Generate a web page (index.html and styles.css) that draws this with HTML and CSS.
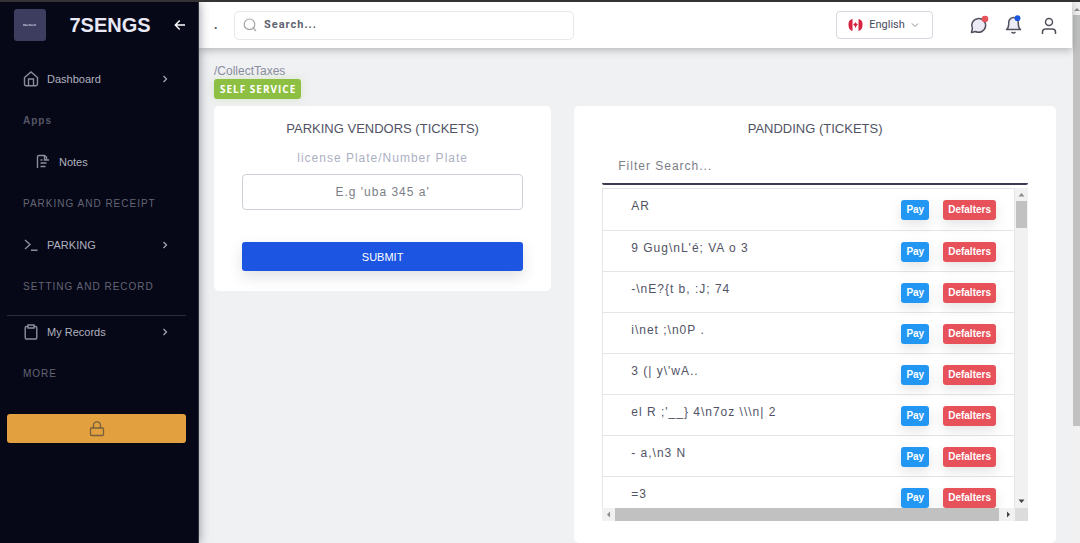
FILE: index.html
```html
<!DOCTYPE html>
<html lang="en">
<head>
<meta charset="utf-8">
<meta name="viewport" content="width=device-width, initial-scale=1">
<title>7SENGS</title>
<link rel="stylesheet" href="styles.css">
</head>
<body>
<div class="app">
  <aside class="sidebar">
    <div class="brand">
      <span class="brand-logo"><svg width="14" height="4" viewBox="0 0 14 4"><path d="M0 2h3M4 1.500v1.500M5.500 2h2.500M9 1.500v1.500M10.500 2h2.500" stroke="#a9a9c4" stroke-width="1.600"/></svg></span>
      <span class="brand-name">7SENGS</span>
      <button class="icon-button" type="button" aria-label="Collapse menu"><svg width="12" height="12" viewBox="0 0 12 12" fill="none" stroke="#fff" stroke-width="1.400"><path d="M11 6H1.500M5.700 1.500 1.300 6l4.400 4.500"/></svg></button>
    </div>
    <nav class="menu">
      <a class="menu-item" href="#">
        <svg class="menu-icon" viewBox="0 0 16 16"><path d="M1.500 6.500 8 1l6.500 5.500V13q0 1.700-1.700 1.700H3.200Q1.500 14.700 1.500 13zM5.500 14.500V8h5v6.500"/></svg>
        <span class="menu-label">Dashboard</span>
        <svg class="chevron" viewBox="0 0 6 8"><path d="m1.500 1 3 3-3 3"/></svg>
      </a>
      <p class="menu-heading menu-group spaced">Apps</p>
      <a class="menu-item menu-sub" href="#">
        <svg class="menu-icon" viewBox="0 0 16 16"><path d="M2.500 14V2.500Q2.500 1.500 4 1.500h5.500V6H14M9.500 1.500l2 1.500v2.500M5.500 6h2M5.500 9h6M5.500 12.500h5"/></svg>
        <span class="menu-label">Notes</span>
      </a>
      <p class="menu-heading spaced">PARKING AND RECEIPT</p>
      <a class="menu-item" href="#">
        <svg class="menu-icon" viewBox="0 0 16 16"><path d="m2 3 5 4.500L2 12M8 13.200h6.500"/></svg>
        <span class="menu-label">PARKING</span>
        <svg class="chevron" viewBox="0 0 6 8"><path d="m1.500 1 3 3-3 3"/></svg>
      </a>
      <p class="menu-heading spaced">SETTING AND RECORD</p>
      <hr class="menu-rule">
      <a class="menu-item" href="#">
        <svg class="menu-icon" viewBox="0 0 16 16"><path d="M5 2.500H3.300Q2.200 2.500 2.200 4v9.500q0 1.500 1.100 1.500h9.400q1.100 0 1.100-1.500V4q0-1.500-1.100-1.500H11M5 1h6v3H5z"/></svg>
        <span class="menu-label">My Records</span>
        <svg class="chevron" viewBox="0 0 6 8"><path d="m1.500 1 3 3-3 3"/></svg>
      </a>
      <p class="menu-heading spaced">MORE</p>
    </nav>
    <button class="lock-button" type="button" aria-label="Lock"><svg width="16" height="16" viewBox="0 0 16 16" fill="none" stroke="#76603d" stroke-width="1.300"><rect x="1.500" y="7" width="13" height="7.500" rx="1"/><path d="M4.500 7V4.300a3.500 3.500 0 0 1 7 0V7"/></svg></button>
  </aside>

  <div class="page">
    <header class="topbar">
      <span class="dot">.</span>
      <label class="search">
        <svg width="14" height="14" viewBox="0 0 14 14" fill="none" stroke="#a5a5a9" stroke-width="1.200"><circle cx="6.500" cy="6.300" r="5.300"/><path d="m10.300 10 2.700 3"/></svg>
        <input class="search-input spaced" type="search" placeholder="Search..." aria-label="Search">
      </label>
      <div class="tools">
        <button class="language" type="button">
          <svg width="15" height="14" viewBox="0 0 15 14"><path d="M4.500 1Q0 2 .500 7q0 5 4 6z" fill="#d7233f"/><path d="M10.500 1Q15 2 14.500 7q0 5-4 6z" fill="#d7233f"/><path d="m7.500 4 .8 1.500 1.500.4-.8 1.700-1.100.8v1.400h-.8V8.400L6 7.600l-.8-1.700 1.500-.4z" fill="#d7233f"/></svg>
          <span>English</span>
          <svg width="8" height="6" viewBox="0 0 8 6" fill="none" stroke="#8d8d96"><path d="m1 1.500 3 3 3-3"/></svg>
        </button>
        <button class="icon-button" type="button" aria-label="Messages"><svg width="20" height="20" viewBox="0 0 20 20"><path d="M2.500 17.500 3.400 13.500A7 6.800 0 1 1 6.500 16.500z" fill="#ecebf5" stroke="#51515e" stroke-width="1.500" stroke-linejoin="round"/><circle cx="16" cy="4" r="3.300" fill="#e7515a"/></svg></button>
        <button class="icon-button" type="button" aria-label="Notifications"><svg width="20" height="20" viewBox="0 0 20 20"><path d="M2.500 14.500q2.200-1.500 2.200-5.500V7.500a4.800 5 0 0 1 9.600 0V9q0 4 2.200 5.500z" fill="#ecebf5" stroke="#51515e" stroke-width="1.500" stroke-linejoin="round"/><path d="M7.500 17.200q2 1.500 4 0" fill="none" stroke="#51515e" stroke-width="1.500"/><circle cx="13.500" cy="3.200" r="2.900" fill="#1b55e2"/></svg></button>
        <button class="icon-button" type="button" aria-label="Account"><svg width="20" height="20" viewBox="0 0 20 20" fill="none" stroke="#51515e" stroke-width="1.500"><circle cx="10" cy="7" r="3.500"/><path d="M3.500 19v-2q0-3 3.200-3h6.600q3.200 0 3.200 3v2"/></svg></button>
      </div>
    </header>

    <main class="content">
      <p class="breadcrumb">/CollectTaxes</p>
      <span class="badge spaced">SELF SERVICE</span>
      <div class="cards">
        <form class="card">
          <h2 class="card-title">PARKING VENDORS (TICKETS)</h2>
          <label class="field-label spaced" for="plate">license Plate/Number Plate</label>
          <input class="field spaced" id="plate" type="text" placeholder="E.g 'uba 345 a'">
          <button class="submit" type="button">SUBMIT</button>
        </form>
        <section class="card card-tall">
          <h2 class="card-title">PANDDING (TICKETS)</h2>
          <input class="filter spaced" type="text" placeholder="Filter Search..." aria-label="Filter search">
          <div class="list-frame">
            <ul class="list">
              <li class="row"><span class="row-text spaced">AR</span><button class="tag pay" type="button">Pay</button><button class="tag defaulter" type="button">Defalters</button></li>
              <li class="row"><span class="row-text spaced">9 Gug\nL'é; VA o 3</span><button class="tag pay" type="button">Pay</button><button class="tag defaulter" type="button">Defalters</button></li>
              <li class="row"><span class="row-text spaced">-\nE?{t b, :J; 74</span><button class="tag pay" type="button">Pay</button><button class="tag defaulter" type="button">Defalters</button></li>
              <li class="row"><span class="row-text spaced">i\net ;\n0P .</span><button class="tag pay" type="button">Pay</button><button class="tag defaulter" type="button">Defalters</button></li>
              <li class="row"><span class="row-text spaced">3 (| y\'wA..</span><button class="tag pay" type="button">Pay</button><button class="tag defaulter" type="button">Defalters</button></li>
              <li class="row"><span class="row-text spaced">el R ;'__} 4\n7oz \\\n| 2</span><button class="tag pay" type="button">Pay</button><button class="tag defaulter" type="button">Defalters</button></li>
              <li class="row"><span class="row-text spaced">- a,\n3 N</span><button class="tag pay" type="button">Pay</button><button class="tag defaulter" type="button">Defalters</button></li>
              <li class="row"><span class="row-text spaced">=3</span><button class="tag pay" type="button">Pay</button><button class="tag defaulter" type="button">Defalters</button></li>
            </ul>
            <div class="bar bar-y">
              <svg width="13" height="13" viewBox="0 0 13 13"><path d="m3.500 8.500 3-3.500 3 3.500z" fill="#8b8b8b"/></svg>
              <span class="thumb thumb-y"></span>
              <svg class="bar-end" width="13" height="13" viewBox="0 0 13 13"><path d="m3.500 4.500 3 3.500 3-3.500z" fill="#444"/></svg>
            </div>
            <div class="bar bar-x">
              <svg width="13" height="13" viewBox="0 0 13 13"><path d="M8 3.500 5 6.500l3 3z" fill="#8b8b8b"/></svg>
              <span class="thumb thumb-x"></span>
              <svg width="13" height="13" viewBox="0 0 13 13"><path d="m5 3.500 3 3-3 3z" fill="#444"/></svg>
            </div>
            <div class="bar-corner"></div>
          </div>
        </section>
      </div>
    </main>
  </div>
  <div class="page-bar">
    <svg width="8" height="13" viewBox="0 0 8 13"><path d="m2 9 3-3 3 3z" fill="#8b8b8b"/></svg>
    <span class="thumb page-thumb"></span>
  </div>
</div>
</body>
</html>
```
FILE: styles.css
```css
* { box-sizing: border-box; }
body {
  margin: 0;
  font: 12px/16px "Liberation Sans", Arial, sans-serif;
  color: #515365;
  background: #f0f1f3;
}
button, input { font: inherit; color: inherit; }
button { border: 0; padding: 0; background: none; cursor: pointer; }
svg { display: block; flex: none; }
p, h2, ul { margin: 0; padding: 0; }
.spaced { letter-spacing: 1px; }

.app {
  display: flex;
  height: 100vh;
  overflow: hidden;
  border-top: 2px solid #353334;
}

/* Sidebar */
.sidebar {
  flex: none;
  width: 199px;
  padding: 7px 12px 0 7px;
  background: #060818;
  border-right: 1px solid #30313d;
  box-shadow: 0 0 10px rgba(40, 42, 60, .5);
  z-index: 2;
}
.brand {
  display: flex;
  align-items: center;
  padding-left: 7px;
}
.brand-logo {
  display: grid;
  place-items: center;
  width: 32px;
  height: 32px;
  border-radius: 3px;
  background: #3d3d5f;
}
.brand-name { flex: 1; text-align: center; font: bold 20px/32px "Liberation Sans", Arial, sans-serif; color: #e8e9f5; }
.icon-button { display: grid; place-items: center; }
.menu {
  display: flex;
  flex-direction: column;
  padding-top: 25px;
}
.menu-item {
  display: flex;
  align-items: center;
  gap: 8px;
  height: 26px;
  padding: 0 18px 0 16px;
  color: #b0b1be;
  font-size: 11px;
  text-decoration: none;
}
.menu-sub { padding-left: 28px; }
.menu-icon { width: 16px; height: 16px; fill: none; stroke: #8c8d9c; stroke-width: 1.4; }
.menu-label { flex: 1; }
.chevron { width: 6px; height: 8px; fill: none; stroke: #a3a4b2; stroke-width: 1.3; }
.menu-heading {
  padding: 20px 16px;
  line-height: 17px;
  font-size: 10px;
  color: #646575;
}
.menu-group { font-weight: bold; color: #555665; }
.menu-rule { width: 100%; margin: 0 0 3px; border: 0; border-top: 1px solid #2c2d3c; }
.lock-button {
  display: grid;
  place-items: center;
  width: 100%;
  height: 29px;
  margin-top: 12px;
  border-radius: 3px;
  background: #e2a03f;
}

/* Top bar */
.page { flex: 1; min-width: 0; display: flex; flex-direction: column; }
.topbar {
  flex: none;
  display: flex;
  align-items: center;
  height: 46px;
  padding: 0 13px 0 15px;
  background: #fff;
  box-shadow: 0 2px 8px rgba(60, 62, 70, .35);
  z-index: 1;
}
.dot { width: 20px; font-weight: bold; }
.search {
  display: flex;
  align-items: center;
  gap: 7px;
  flex: 0 1 340px;
  height: 29px;
  padding: 0 8px;
  border: 1px solid #e8e8ec;
  border-radius: 5px;
}
.search-input {
  flex: 1;
  min-width: 0;
  border: 0;
  padding: 0;
  background: none;
  outline: 0;
  font: bold 11px/16px Roboto, sans-serif;
}
.search-input::placeholder { color: #60636f; opacity: 1; }
.tools { display: flex; align-items: center; gap: 15px; margin-left: auto; }
.language {
  display: flex;
  align-items: center;
  justify-content: space-between;
  width: 97px;
  height: 28px;
  margin-right: 21px;
  padding: 0 13px 0 11px;
  border: 1px solid #d6d7de;
  border-radius: 4px;
  font: 11px/16px Roboto, sans-serif;
  color: #484a5c;
}

/* Content */
.content { flex: 1; display: flex; flex-direction: column; align-items: flex-start; padding: 15px 16px 0 15px; }
.breadcrumb { font-size: 12px; color: #8b8da0; }
.badge {
  padding: 2px 5px 2px 6px;
  border-radius: 3px;
  background: #8dbf42;
  color: #fff;
  font: bold 10px/16px "Open Sans", sans-serif;
  box-shadow: 0 0 8px rgba(141, 191, 66, .25);
}
.cards {
  flex: 1;
  align-self: stretch;
  display: grid;
  grid-template-columns: minmax(0, 7fr) minmax(0, 10fr);
  align-items: start;
  gap: 23px;
  margin-top: 7px;
}
.card {
  display: flex;
  flex-direction: column;
  padding: 14px 28px 20px;
  border-radius: 5px;
  background: #fff;
}
.card-tall { align-self: stretch; }
.card-title { font-size: 13px; font-weight: normal; line-height: 18px; text-align: center; }
.field-label { margin: 12px 0 8px; text-align: center; color: #acb0c3; }
.field {
  height: 36px;
  width: 100%;
  border: 1px solid #cfd1d9;
  border-radius: 4px;
  padding: 0 12px;
  text-align: center;
}
.field::placeholder, .filter::placeholder { color: #7c7e87; opacity: 1; }
.submit {
  height: 29px;
  margin-top: 32px;
  border-radius: 3px;
  background: #1b55e2;
  color: #fff;
  font-size: 11px;
  box-shadow: 0 6px 14px rgba(70, 72, 85, .16);
}
.filter {
  width: 100%;
  height: 36px;
  margin-top: 11px;
  padding: 0 16px;
  border: 0;
  border-bottom: 2px solid #3b3a53;
  border-radius: 2px;
  background: none;
  outline: 0;
}

/* Ticket list */
.list-frame {
  display: grid;
  grid-template: 320px 13px / minmax(0, 1fr) 13px;
  margin-top: 3px;
}
.list {
  overflow: hidden;
  list-style: none;
  border: 1px solid #e4e5e9;
  border-bottom: 0;
}
.row {
  display: flex;
  align-items: flex-start;
  gap: 14px;
  height: 41px;
  padding-left: 28px;
  padding-right: 18px;
  border-bottom: 1px solid #e4e5e9;
}
.row:first-child { height: 42px; }
.row-text { flex: 1; margin-top: 9px; }
.tag {
  height: 20px;
  margin-top: 11px;
  padding: 0 5px;
  border-radius: 3px;
  color: #fff;
  font-size: 10px;
  font-weight: bold;
  box-shadow: 0 5px 12px rgba(70, 72, 85, .14);
}
.pay { background: #2196f3; }
.defaulter { background: #e7515a; }
.bar { display: flex; background: #f1f1f1; }
.bar-y { flex-direction: column; align-items: center; }
.bar-end { margin-top: auto; }
.thumb { background: #c1c1c1; }
.thumb-y { width: 11px; height: 27px; }
.thumb-x { flex: 1; margin-right: 3px; }
.bar-corner { background: #dcdcdc; }

.page-bar { flex: none; width: 8px; display: flex; flex-direction: column; background: #f1f1f1; }
.page-thumb { height: 76%; margin-left: 1px; }
```
